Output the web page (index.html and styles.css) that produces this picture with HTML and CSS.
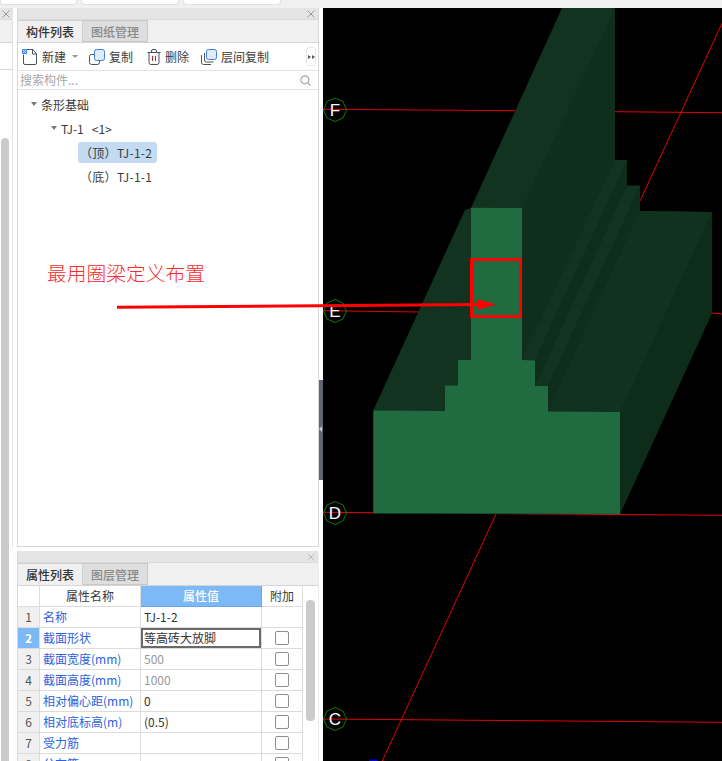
FILE: index.html
```html
<!DOCTYPE html>
<html lang="zh">
<head>
<meta charset="utf-8">
<title>构件列表</title>
<link rel="stylesheet" href="styles.css">
</head>
<body>
<div class="page">
  <div class="topbar">
    <div class="toptab t1"></div>
    <div class="toptab t2"></div>
    <div class="toptab t2"></div>
  </div>
  <div class="workspace">
    <aside class="strip">
      <div class="strip-head"><svg class="close" width="8" height="8" viewBox="0 0 8 8"><path d="M.5 .5 7.500 7.500M7.500 .5 .5 7.500"/></svg></div>
      <div class="strip-tabs"></div>
      <div class="strip-tools"></div>
      <div class="strip-thumb"></div>
    </aside>
    <div class="panels">
      <section class="panel panel-top">
        <div class="panel-head"><svg class="close" width="8" height="8" viewBox="0 0 8 8"><path d="M.5 .5 7.500 7.500M7.500 .5 .5 7.500"/></svg></div>
        <div class="tabs">
          <div class="tab active">构件列表</div>
          <div class="tab">图纸管理</div>
        </div>
        <div class="toolbar">
          <div class="tool tool-new">
            <svg class="ico" width="16" height="16" viewBox="0 0 16 16"><path class="ln" d="M1.500 5.500V14a1.500 1.500 0 0 0 1.500 1.500h10a1.500 1.500 0 0 0 1.500-1.500V5L11 .5H5"/><path class="ln" d="M10.500 .5V5H14.500"/><rect class="dot" x="0" y="0" width="5" height="5"/><path class="dot-w" d="M1 1h1v1H1zM3 1h1v1H3zM2 2h1v1H2zM1 3h1v1H1zM3 3h1v1H3z"/></svg>
            <span>新建</span>
            <i class="caret small"></i>
          </div>
          <div class="tool tool-copy">
            <svg class="ico" width="16" height="16" viewBox="0 0 16 16"><rect class="ln" x=".5" y="5.500" width="10" height="10" rx="2"/><rect class="blue" x="5.500" y=".5" width="10" height="11" rx="2"/></svg>
            <span>复制</span>
          </div>
          <div class="tool tool-del">
            <svg class="ico" width="14" height="16" viewBox="0 0 14 16"><path class="ln" d="M.5 3.500h13M2 3.500V13.500A2 2 0 0 0 4 15.500h6a2 2 0 0 0 2-2V3.500M4.500 3.500V2A1.500 1.500 0 0 1 6 .5h2A1.500 1.500 0 0 1 9.500 2V3.500"/><path class="red" d="M5.500 7v5M8.500 7v5"/></svg>
            <span>删除</span>
          </div>
          <div class="tool tool-floor">
            <svg class="ico" width="16" height="16" viewBox="0 0 16 16"><path class="ln" d="M.5 6V13.500A2 2 0 0 0 2.500 15.500H10"/><path class="ln" d="M3.500 4V11A2 2 0 0 0 5.500 13H12.500"/><rect class="blue" x="5.500" y=".5" width="10" height="10" rx="2"/></svg>
            <span>层间复制</span>
          </div>
          <div class="more"><i></i><i></i></div>
        </div>
        <div class="search">
          <span class="placeholder">搜索构件...</span>
          <svg class="mag" width="11" height="11" viewBox="0 0 11 11"><circle cx="4.800" cy="4.800" r="4"/><path d="M7.800 7.800 10.500 10.500"/></svg>
        </div>
        <div class="tree">
          <div class="node lvl1"><i class="caret"></i><span>条形基础</span></div>
          <div class="node lvl2"><i class="caret"></i><span>TJ-1&nbsp;&nbsp;&nbsp;&lt;1&gt;</span></div>
          <div class="node lvl3"><span class="pill selected">（顶）TJ-1-2</span></div>
          <div class="node lvl3"><span class="pill">（底）TJ-1-1</span></div>
        </div>
      </section>
      <section class="panel panel-bottom">
        <div class="panel-head"><svg class="close faint" width="8" height="8" viewBox="0 0 8 8"><path d="M.5 .5 7.500 7.500M7.500 .5 .5 7.500"/></svg></div>
        <div class="tabs">
          <div class="tab active">属性列表</div>
          <div class="tab">图层管理</div>
        </div>
        <div class="grid-wrap">
          <table class="props">
            <colgroup><col class="c-num"><col class="c-name"><col class="c-val"><col class="c-add"></colgroup>
            <thead>
              <tr><th class="blank"></th><th>属性名称</th><th class="hot">属性值</th><th>附加</th></tr>
            </thead>
            <tbody>
              <tr><td class="num">1</td><td class="name">名称</td><td class="val">TJ-1-2</td><td></td></tr>
              <tr><td class="num hot">2</td><td class="name">截面形状</td><td class="val editing">等高砖大放脚</td><td class="chk"><i></i></td></tr>
              <tr><td class="num">3</td><td class="name">截面宽度(mm)</td><td class="val muted">500</td><td class="chk"><i></i></td></tr>
              <tr><td class="num">4</td><td class="name">截面高度(mm)</td><td class="val muted">1000</td><td class="chk"><i></i></td></tr>
              <tr><td class="num">5</td><td class="name">相对偏心距(mm)</td><td class="val">0</td><td class="chk"><i></i></td></tr>
              <tr><td class="num">6</td><td class="name">相对底标高(m)</td><td class="val">(0.5)</td><td class="chk"><i></i></td></tr>
              <tr><td class="num">7</td><td class="name">受力筋</td><td class="val"></td><td class="chk"><i></i></td></tr>
              <tr><td class="num">8</td><td class="name">分布筋</td><td class="val"></td><td class="chk"><i></i></td></tr>
            </tbody>
          </table>
          <div class="track"><div class="thumb"></div></div>
        </div>
      </section>
    </div>
    <div class="splitter"><div class="grip"></div></div>
    <main class="canvas">
      <svg class="scene" width="399" height="753" viewBox="323 8 399 753">
        <g class="axis">
          <path d="M323 109.300 515 110.700M615 111.700 722 112.700"/>
          <path d="M323 310.700 419 312M712 313 722 314"/>
          <path d="M323 512.300 722 515.300"/>
          <path d="M323 719 722 722.300"/>
          <path d="M722 23.300 640 201"/>
          <path d="M496 514 382.300 761"/>
        </g>
        <rect class="origin" x="369" y="759.500" width="8" height="2"/>
        <polygon class="wall" points="373,411 465,210 471,208 562,8 615,8 615,160 627,160 627,185.500 640,185.500 640,211 712,212 712,313 620,514 373,514"/>
        <polygon class="side" points="522,208 615,8 615,160 522,360"/>
        <polygon class="side2" points="535,360 627,160 627,185.500 535,386"/>
        <polygon class="side2" points="548,386 640,185.500 640,211 548,411.500"/>
        <polygon class="top" points="548,411.500 640,211 712,212 620,412"/>
        <polygon class="side3" points="620,412 712,212 712,313 620,514"/>
        <polygon class="front" points="373.500,410.500 445,411 445,385.500 458,385.500 458,360 471,360 471,207.700 522,208 522,360 535,360.500 535,386 548,386 548,411.500 620,412 620,514 373.500,513"/>
        <g class="bubble"><polygon points="335,98 343,101.500 346.500,110 343,118 335,121.500 327,118 323.500,110 327,101.500"/><text x="335" y="116">F</text></g>
        <g class="bubble"><polygon points="335,299.500 343,303 346.500,311 343,319 335,322.500 327,319 323.500,311 327,303"/><text x="335" y="317">E</text></g>
        <g class="bubble"><polygon points="335,501.500 343,505 346.500,513 343,521 335,524.500 327,521 323.500,513 327,505"/><text x="335" y="519">D</text></g>
        <g class="bubble"><polygon points="335,707.500 343,711 346.500,719 343,727 335,730.500 327,727 323.500,719 327,711"/><text x="335" y="725">C</text></g>
      </svg>
    </main>
  </div>
  <div class="note">最用圈梁定义布置</div>
  <svg class="markup" width="722" height="761" viewBox="0 0 722 761">
    <rect class="box" x="471.500" y="259.500" width="49" height="57"/>
    <path class="shaft" d="M117 307.300 480 304.500"/>
    <polygon class="head" points="477,299 496,304.500 477,310"/>
  </svg>
</div>
</body>
</html>
```
FILE: styles.css
```css
* { box-sizing: border-box; }
html, body { margin: 0; padding: 0; }
body {
  background: #fff;
  font-family: "Noto Sans CJK SC", "Liberation Sans", sans-serif;
  font-size: 12px;
  color: #333;
}
.page { position: relative; width: 722px; height: 761px; overflow: hidden; background: #fff; }

.topbar { display: flex; gap: 4px; height: 8px; background: #f0f0f0; }
.toptab { height: 5px; background: #fff; border: 1px solid #e2e2e2; border-top: 0; border-radius: 0 0 4px 4px; }
.t1 { width: 77px; }
.t2 { width: 98px; }

.workspace { display: flex; height: 753px; }

.strip { position: relative; width: 17px; flex: none; }
.strip::after { content: ""; position: absolute; left: 12px; top: 0; width: 1px; height: 539px; background: #e2e2e2; }
.strip-head { height: 12px; background: #e5e5e5; border-bottom: 1px solid #d9d9d9; width: 12px; display: flex; justify-content: center; align-items: center; }
.strip-tabs { height: 23px; width: 12px; background: #f0f0f0; border-bottom: 1px solid #d5d5d5; }
.strip-tools { height: 27px; width: 12px; border-bottom: 1px solid #d5d5d5; }
.strip-thumb { width: 8px; margin: 68px 0 0 1px; height: 640px; background: #cbcbcb; border-radius: 4px 4px 0 0; }

.close { display: block; flex: none; }
.close path { fill: none; stroke: #9a9a9a; stroke-width: 1; }
.close.faint path { stroke: #bdbdbd; }

.panels { width: 302px; flex: none; display: flex; flex-direction: column; gap: 4px; }
.panel { border: 1px solid #d8d8d8; border-top: 0; display: flex; flex-direction: column; overflow: hidden; }
.panel-top { height: 539px; }
.panel-bottom { height: 210px; border-bottom: 0; border-right-color: #ececec; }
.panel-head { height: 12px; flex: none; background: #e5e5e5; border-bottom: 1px solid #dadada; display: flex; justify-content: flex-end; align-items: center; padding-right: 3px; }

.tabs { height: 23px; flex: none; display: flex; background: #f0f0f0; border-bottom: 1px solid #d5d5d5; }
.tab { width: 65px; line-height: 21px; text-align: center; font-weight: 500; color: #8a8a8a; background: #dedede; border: 1px solid #c8c8c8; border-left: 0; }
.tab.active { color: #333; background: #f0f0f0; border-bottom: 0; border-color: #d0d0d0; border-top: 1px solid #d0d0d0; }

.toolbar { height: 28px; flex: none; display: flex; align-items: center; border-bottom: 1px solid #e2e2e2; padding-left: 4px; position: relative; }
.tool { display: flex; align-items: center; color: #3c3c3c; }
.tool span { line-height: 16px; margin-left: 4px; }
.ico { flex: none; }
.tool-new { width: 67px; }
.tool-new .caret { margin-left: 6px; }
.tool-copy { width: 58px; }
.tool-del { width: 54px; }
.ln { fill: none; stroke: #4a5160; stroke-width: 1; }
.blue { fill: #dfeafb; stroke: #3d7fe0; stroke-width: 1; }
.red { fill: none; stroke: #d92020; stroke-width: 1; }
.dot { fill: #4a8ff0; }
.dot-w { fill: #cfe0fb; }
.more { position: absolute; left: 288px; top: 4px; width: 10px; height: 19px; border: 1px solid #e8e8e8; border-radius: 3px; display: flex; align-items: center; justify-content: center; gap: 1px; }
.more i { width: 0; height: 0; border-left: 3px solid #555; border-top: 2.500px solid transparent; border-bottom: 2.500px solid transparent; }

.search { height: 19px; flex: none; display: flex; align-items: center; justify-content: space-between; padding: 0 7px 0 2px; border-bottom: 1px solid #e2e2e2; }
.placeholder { color: #a8a8a8; line-height: 18px; }
.mag circle, .mag path { fill: none; stroke: #a8a8a8; stroke-width: 1.200; }

.tree { flex: 1; display: flex; flex-direction: column; padding-top: 2px; }
.node { height: 24px; display: flex; align-items: center; color: #3a3a3a; }
.lvl1 { padding-left: 13px; }
.lvl2 { padding-left: 33px; }
.lvl3 { padding-left: 60px; }
.node .caret { margin-right: 4px; }
.caret { display: inline-block; width: 0; height: 0; border-top: 4px solid #777; border-left: 3.500px solid transparent; border-right: 3.500px solid transparent; }
.caret.small { border-top-width: 3px; border-left-width: 3px; border-right-width: 3px; border-top-color: #999; }
.pill { width: 79px; height: 21px; line-height: 21px; padding-left: 2px; border-radius: 3px; white-space: nowrap; letter-spacing: .3px; }
.pill.selected { background: #c2daf2; }

.grid-wrap { flex: 1; display: flex; min-height: 0; }
.props { width: 285px; flex: none; table-layout: fixed; border-collapse: separate; border-spacing: 0; }
.c-num { width: 22px; }
.c-name { width: 101px; }
.c-val { width: 121px; }
.c-add { width: 41px; }
.props th, .props td { height: 21px; padding: 0; font-weight: 400; border-right: 1px solid #dcdcdc; border-bottom: 1px solid #dcdcdc; white-space: nowrap; overflow: hidden; line-height: 18px; }
.props th { color: #3a3a3a; text-align: center; }
.props th.hot { background: #7db8f7; color: #fff; font-weight: 500; border-color: #64a8f0; }
.props td.num { background: #f0f0f0; text-align: center; color: #555; }
.props td.num.hot { background: #7db8f7; color: #fff; font-weight: 700; }
.props td.name { color: #2b62dd; padding-left: 3px; }
.props td.val { padding-left: 3px; color: #333; }
.props td.muted { color: #999; }
.props td.editing { box-shadow: inset 0 0 0 2px #6a6a6a; padding-left: 3px; }
.chk { text-align: center; }
.chk i { display: block; width: 14px; height: 14px; margin: 0 auto; border: 1px solid #8e8e8e; border-radius: 2px; }

.track { flex: 1; padding: 14px 3px 0; }
.thumb { width: 9px; height: 121px; background: #cbcbcb; border-radius: 4px; }

.splitter { width: 4px; flex: none; position: relative; }
.grip { margin-top: 372px; height: 100px; background: #5e6772; }
.grip::after { content: ""; position: absolute; left: 0; top: 418px; width: 0; height: 0; border-right: 3px solid #c4c9cf; border-top: 3px solid transparent; border-bottom: 3px solid transparent; }

.canvas { flex: 1; background: #000; overflow: hidden; }
.scene { display: block; }
.axis path { fill: none; stroke: #e40000; stroke-width: 1; }
.origin { fill: #0000e0; }
.wall { fill: #113320; }
.side { fill: #0f2f1c; }
.side2 { fill: #0f2d1b; }
.top { fill: #10321e; }
.side3 { fill: #0e2c1a; }
.front { fill: #206b40; }
.bubble polygon { fill: none; stroke: #0a7a0a; stroke-width: 1; }
.bubble text { fill: #fff; font: 17px "Liberation Sans", sans-serif; text-anchor: middle; }

.note { position: absolute; left: 47px; top: 260px; font-family: "Liberation Serif", "Noto Sans CJK SC", serif; font-size: 19.750px; font-weight: 300; line-height: 28px; color: #ff2a2a; white-space: nowrap; }
.markup { position: absolute; left: 0; top: 0; pointer-events: none; }
.box { fill: none; stroke: #f00; stroke-width: 3; }
.shaft { fill: none; stroke: #f00; stroke-width: 3; }
.head { fill: #f00; }
```
